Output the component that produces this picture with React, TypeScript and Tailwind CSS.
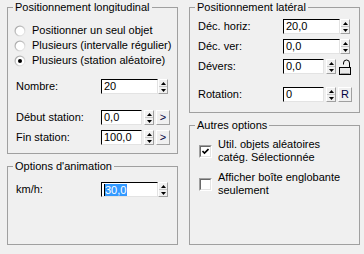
import React from "react";

function Spinner() {
  return (
    <div className="w-[10px] h-[15px] flex flex-col border border-t-white border-l-white border-r-[#a0a0a0] border-b-[#a0a0a0] bg-[#f0f0f0]">
      <div className="flex-1 flex items-center justify-center border-b border-b-[#c8c8c8]">
        <svg width="5" height="3" viewBox="0 0 5 3">
          <path d="M2.5 0 L5 3 L0 3 Z" fill="#000" />
        </svg>
      </div>
      <div className="flex-1 flex items-center justify-center">
        <svg width="5" height="3" viewBox="0 0 5 3">
          <path d="M0 0 L5 0 L2.5 3 Z" fill="#000" />
        </svg>
      </div>
    </div>
  );
}

function Field({ value, w, selected }: { value: string; w: string; selected?: boolean }) {
  return (
    <div
      className={`${w} h-[15px] bg-white border border-t-[#000] border-l-[#000] border-r-[#e3e3e3] border-b-[#e3e3e3] flex items-center pl-[2px] overflow-hidden`}
    >
      {selected ? (
        <span className="flex items-center h-[12px]">
          <span className="w-[1px] h-[12px] bg-black" />
          <span className="bg-[#3399ff] text-white h-[12px] leading-[12px] pr-[1px]">{value}</span>
        </span>
      ) : (
        <span className="leading-[13px]">{value}</span>
      )}
    </div>
  );
}

function SmallButton({ children }: { children: React.ReactNode }) {
  return (
    <div className="ml-[2px] w-[14px] h-[15px] flex items-center justify-center border border-t-white border-l-white border-r-[#a0a0a0] border-b-[#a0a0a0] bg-[#f0f0f0] text-[11px] leading-[13px] text-[#000040]">
      {children}
    </div>
  );
}

function Lock() {
  return (
    <div className="ml-[2px] w-[14px] h-[16px] flex items-center justify-center">
      <svg width="12" height="16" viewBox="0 0 12 16">
        <path d="M4.5 5.5 V4 a3 3 0 0 1 6 0 V8.5" fill="none" stroke="#000" strokeWidth="1" />
        <rect x="0.5" y="8.5" width="11" height="7" fill="#e8e8e8" stroke="#000" strokeWidth="1" />
        <line x1="1.5" y1="14.5" x2="10.5" y2="14.5" stroke="#a0a0a0" strokeWidth="1" />
      </svg>
    </div>
  );
}

function Radio({ checked }: { checked?: boolean }) {
  return (
    <svg width="12" height="12" viewBox="0 0 12 12">
      <defs>
        <linearGradient id="rg" x1="0" y1="0" x2="1" y2="1">
          <stop offset="0" stopColor="#9a9a9a" />
          <stop offset="1" stopColor="#f8f8f8" />
        </linearGradient>
      </defs>
      <circle cx="6" cy="6" r="5.5" fill="url(#rg)" />
      <circle cx="6" cy="6" r="4.3" fill="#fff" />
      {checked && <circle cx="6" cy="6" r="2" fill="#000" />}
    </svg>
  );
}

function Checkbox({ checked }: { checked?: boolean }) {
  return (
    <div className="w-[13px] h-[13px] shrink-0 border border-t-[#a0a0a0] border-l-[#a0a0a0] border-r-white border-b-white">
      <div className="w-full h-full bg-white border border-t-[#696969] border-l-[#696969] border-r-[#e3e3e3] border-b-[#e3e3e3] flex items-center justify-center">
        {checked && (
          <svg width="7" height="7" viewBox="0 0 7 7">
            <path d="M0.5 3 L2.5 5 L6.5 1" fill="none" stroke="#000" strokeWidth="1.6" />
          </svg>
        )}
      </div>
    </div>
  );
}

function Row({ label, children, className = "" }: { label: string; children: React.ReactNode; className?: string }) {
  return (
    <div className={`flex items-center h-[15px] ${className}`}>
      <div className="w-[85px] leading-[13px]">{label}</div>
      {children}
    </div>
  );
}

export default function App() {
  return (
    <div className="w-[364px] h-[254px] bg-[#f0f0f0] flex gap-[11px] pl-[7px] text-[11px] leading-[13px] text-black font-['Liberation_Sans',Arial,sans-serif]">
      <div className="flex flex-col w-[171px]">
        <fieldset className="h-[154px] border border-[#a0a0a0]">
          <legend className="ml-[5px] px-[2px] leading-[14px]">Positionnement longitudinal</legend>
          <div className="flex flex-col pt-[9px] pl-[6px]">
            <div className="flex items-center h-[15px]">
              <Radio />
              <span className="ml-[6px]">Positionner un seul objet</span>
            </div>
            <div className="flex items-center h-[15px]">
              <Radio />
              <span className="ml-[6px]">Plusieurs (intervalle régulier)</span>
            </div>
            <div className="flex items-center h-[15px]">
              <Radio checked />
              <span className="ml-[6px]">Plusieurs (station aléatoire)</span>
            </div>
          </div>
          <div className="flex flex-col pl-[8px]">
            <Row label="Nombre:" className="mt-[11px]">
              <Field value="20" w="w-[57px]" />
              <Spinner />
            </Row>
            <Row label="Début station:" className="mt-[16px]">
              <Field value="0,0" w="w-[41px]" />
              <div className="ml-[2px]">
                <Spinner />
              </div>
              <SmallButton>&gt;</SmallButton>
            </Row>
            <Row label="Fin station:" className="mt-[5px]">
              <Field value="100,0" w="w-[41px]" />
              <div className="ml-[2px]">
                <Spinner />
              </div>
              <SmallButton>&gt;</SmallButton>
            </Row>
          </div>
        </fieldset>
        <fieldset className="mt-[5px] h-[86px] border border-[#a0a0a0]">
          <legend className="ml-[5px] px-[2px] leading-[14px]">Options d'animation</legend>
          <div className="flex flex-col pl-[8px]">
            <Row label="km/h:" className="mt-[9px]">
              <Field value="30,0" w="w-[57px]" selected />
              <Spinner />
            </Row>
          </div>
        </fieldset>
      </div>
      <div className="flex flex-col w-[171px]">
        <fieldset className="h-[113px] border border-[#a0a0a0]">
          <legend className="ml-[5px] px-[2px] leading-[14px]">Positionnement latéral</legend>
          <div className="flex flex-col pl-[8px]">
            <Row label="Déc. horiz:" className="mt-[5px]">
              <Field value="20,0" w="w-[57px]" />
              <Spinner />
            </Row>
            <Row label="Déc. ver:" className="mt-[5px]">
              <Field value="0,0" w="w-[57px]" />
              <Spinner />
            </Row>
            <Row label="Dévers:" className="mt-[5px]">
              <Field value="0,0" w="w-[41px]" />
              <div className="ml-[2px]">
                <Spinner />
              </div>
              <Lock />
            </Row>
            <Row label="Rotation:" className="mt-[13px]">
              <Field value="0" w="w-[41px]" />
              <div className="ml-[2px]">
                <Spinner />
              </div>
              <SmallButton>R</SmallButton>
            </Row>
          </div>
        </fieldset>
        <fieldset className="mt-[5px] h-[127px] border border-[#a0a0a0]">
          <legend className="ml-[5px] px-[2px] leading-[14px]">Autres options</legend>
          <div className="flex flex-col pl-[9px] pt-[6px]">
            <div className="flex items-center">
              <Checkbox checked />
              <div className="ml-[6px] leading-[13px]">
                Util. objets aléatoires
                <br />
                catég. Sélectionnée
              </div>
            </div>
            <div className="flex items-center mt-[7px]">
              <Checkbox />
              <div className="ml-[6px] leading-[13px]">
                Afficher boîte englobante
                <br />
                seulement
              </div>
            </div>
          </div>
        </fieldset>
      </div>
    </div>
  );
}
